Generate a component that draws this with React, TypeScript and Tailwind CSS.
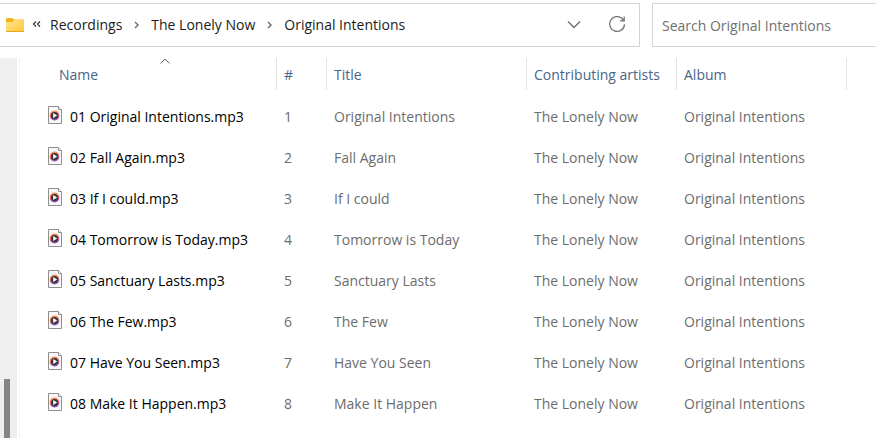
import React from "react";

const tracks = [
  "Original Intentions",
  "Fall Again",
  "If I could",
  "Tomorrow is Today",
  "Sanctuary Lasts",
  "The Few",
  "Have You Seen",
  "Make It Happen",
];

function FolderIcon() {
  return (
    <svg width="18" height="14" viewBox="0 0 18 14" aria-hidden="true">
      <defs>
        <linearGradient id="folder" x1="0" y1="0" x2="1" y2="1">
          <stop offset="0" stopColor="#ffe395" />
          <stop offset="1" stopColor="#ffc937" />
        </linearGradient>
      </defs>
      <path d="M0 1q0-1 1-1h5l2 1.500h9q1 0 1 1V8H0z" fill="#f5b31b" />
      <path d="M0 4h6.500L8 2h9q1 0 1 1v10q0 1-1 1H1q-1 0-1-1z" fill="url(#folder)" />
      <path d="M0 13h18q0 1-1 1H1q-1 0-1-1z" fill="#e9a520" />
    </svg>
  );
}

function Crumb({ children }: { children: React.ReactNode }) {
  return (
    <button type="button" className="whitespace-nowrap">
      {children}
    </button>
  );
}

function Separator() {
  return (
    <svg className="ml-3 mr-[11px]" width="6" height="10" viewBox="0 0 6 10" fill="none" stroke="#6b6b6b" strokeWidth="1.4" aria-hidden="true">
      <path d="M1 2l3 3-3 3" />
    </svg>
  );
}

function MediaFileIcon() {
  return (
    <svg className="mb-[3px] shrink-0" width="14" height="18" viewBox="0 0 14 18" aria-hidden="true">
      <defs>
        <linearGradient id="disc" x1="0" y1="0" x2="0.300" y2="1">
          <stop offset="0" stopColor="#ff9a4b" />
          <stop offset="0.500" stopColor="#ee7a58" />
          <stop offset="1" stopColor="#8a4ab4" />
        </linearGradient>
      </defs>
      <path d="M.5.5h10l3 3v14H.5z" fill="#f8f8fa" stroke="#8f8f8f" />
      <path d="M10.500 .5v3h3" fill="#fff" stroke="#8f8f8f" />
      <circle cx="6.500" cy="9.500" r="4.900" fill="url(#disc)" />
      <circle cx="6.500" cy="9.500" r="3.500" fill="#33333f" />
      <path d="M5.200 7v5l4-2.500z" fill="#fff" />
    </svg>
  );
}

function HeaderCell({ label, sorted }: { label: string; sorted?: boolean }) {
  return (
    <th scope="col" aria-sort={sorted ? "ascending" : undefined} className="p-0 text-left font-normal">
      <button type="button" className={`relative flex h-8 w-full items-center border-r border-[#e3e3e3] pt-0.5 text-[#4a6588] ${sorted ? "pl-[39px]" : "pl-[7px]"}`}>
        {label}
        {sorted && (
          <svg className="absolute left-[140px] top-0" width="10" height="6" viewBox="0 0 10 6" fill="none" stroke="#666" aria-hidden="true">
            <path d="M.5 5.500L5 1l4.500 4.500" />
          </svg>
        )}
      </button>
    </th>
  );
}

export default function App() {
  return (
    <div className="flex h-screen flex-col overflow-hidden bg-white pt-[3px] font-['Open_Sans','Noto_Sans',sans-serif] text-sm text-[#1b1b1b]">
      <header className="flex h-11 shrink-0 gap-3">
        <div className="flex flex-1 items-center border-y border-r border-[#d4d4d4] pl-1.5">
          <FolderIcon />
          <svg className="ml-2 mr-[9px]" width="9" height="8" viewBox="0 0 9 8" fill="none" stroke="#333" strokeWidth="1.200" aria-hidden="true">
            <path d="M4 .5L1.500 3 4 5.500M8 .5L5.500 3 8 5.500" />
          </svg>
          <nav aria-label="Folder path" className="flex flex-1 items-center">
            <Crumb>Recordings</Crumb>
            <Separator />
            <Crumb>The Lonely Now</Crumb>
            <Separator />
            <Crumb>Original Intentions</Crumb>
          </nav>
          <button type="button" aria-label="Previous locations" className="mr-7">
            <svg width="14" height="8" viewBox="0 0 14 8" fill="none" stroke="#707070" strokeWidth="1.400" aria-hidden="true">
              <path d="M1 .5l6 6 6-6" />
            </svg>
          </button>
          <button type="button" aria-label="Refresh" className="mr-3">
            <svg width="18" height="18" viewBox="0 0 18 18" fill="none" stroke="#757575" strokeWidth="1.300" aria-hidden="true">
              <path d="M14.500 4.300A7.400 7.400 0 1 0 15.500 8.200M15.200 .5v4.300H11" />
            </svg>
          </button>
        </div>
        <input
          type="search"
          aria-label="Search Original Intentions"
          placeholder="Search Original Intentions"
          className="w-56 border-y border-l border-[#d4d4d4] bg-white pl-[9px] pt-0.5 outline-none placeholder:text-[#707070]"
        />
      </header>
      <div className="mt-[11px] flex min-h-0 flex-1">
        <div className="flex w-[17px] shrink-0 flex-col justify-end bg-[#efefef] pl-1">
          <div className="h-[59px] w-1.5 bg-[#858585]" />
        </div>
        <main className="ml-0.5 min-w-0 flex-1 overflow-hidden border-l border-[#f3f3f3]">
          <table className="w-[827px] table-fixed border-collapse">
            <colgroup>
              <col className="w-[257px]" />
              <col className="w-[50px]" />
              <col className="w-[200px]" />
              <col className="w-[150px]" />
              <col className="w-[170px]" />
            </colgroup>
            <thead>
              <tr>
                <HeaderCell label="Name" sorted />
                <HeaderCell label="#" />
                <HeaderCell label="Title" />
                <HeaderCell label="Contributing artists" />
                <HeaderCell label="Album" />
              </tr>
            </thead>
            <tbody className="text-[#6d6d6d] before:block before:h-1.5">
              {tracks.map((title, i) => (
                <tr key={title} className="h-[41px] whitespace-nowrap">
                  <td className="p-0 pl-7 text-black">
                    <div className="flex items-center gap-2">
                      <MediaFileIcon />
                      {`0${i + 1} ${title}.mp3`}
                    </div>
                  </td>
                  <td className="p-0 pl-[7px]">{i + 1}</td>
                  <td className="p-0 pl-[7px]">{title}</td>
                  <td className="p-0 pl-[7px]">The Lonely Now</td>
                  <td className="p-0 pl-[7px]">Original Intentions</td>
                </tr>
              ))}
            </tbody>
          </table>
        </main>
      </div>
    </div>
  );
}
